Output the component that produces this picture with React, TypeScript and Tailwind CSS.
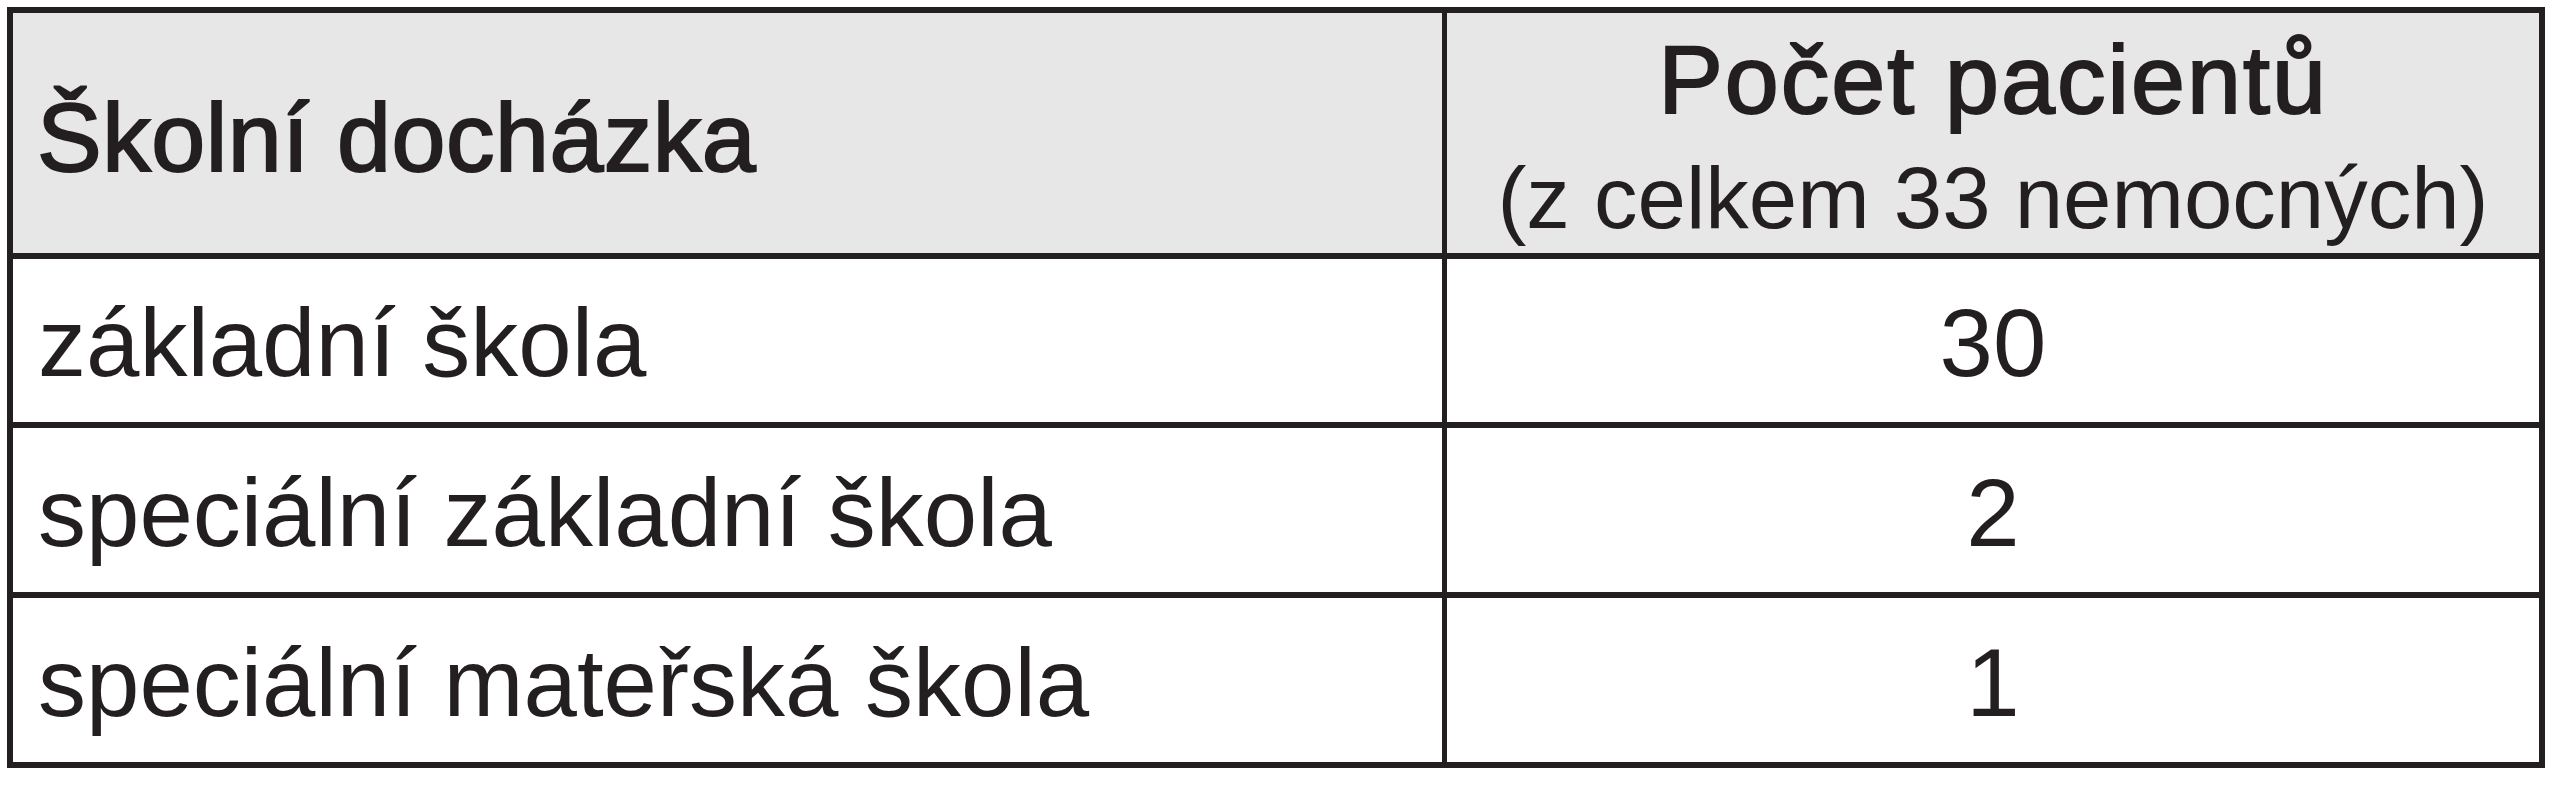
import React from "react";

const rows = [
  { label: "základní škola", value: "30" },
  { label: "speciální základní škola", value: "2" },
  { label: "speciální mateřská škola", value: "1" },
];

export default function App() {
  return (
    <div className="min-h-[800px] w-[2555px] bg-white pl-[7px] pt-[7px] font-['Liberation_Sans',Arial,sans-serif] text-[#231f20]">
      <div className="flex w-[2538px] flex-col border-[6px] border-[#231f20]">
        {/* header */}
        <div className="flex h-[240px] bg-[#e7e7e7]">
          <div className="flex w-[1434px] shrink-0 items-center border-r-[5px] border-[#231f20] pl-[24px] pt-[8px]">
            <span className="text-[97px] leading-none tracking-[0.5px] [-webkit-text-stroke:2px_#231f20]">
              Školní docházka
            </span>
          </div>
          <div className="flex flex-1 flex-col items-center pt-[17px]">
            <div className="text-[97px] leading-[100px] tracking-[2px] [-webkit-text-stroke:2px_#231f20]">
              Počet pacientů
            </div>
            <div className="mt-[18px] text-[87px] leading-[100px]">
              (z celkem 33 nemocných)
            </div>
          </div>
        </div>
        {rows.map((r, i) => (
          <div
            key={r.label}
            className={`flex border-t-[6px] border-[#231f20] ${i === 0 ? "h-[169px]" : "h-[170px]"}`}
          >
            <div className="flex w-[1434px] shrink-0 items-center border-r-[5px] border-[#231f20] pl-[25px] pt-[5px]">
              <span className="text-[96px] leading-none">{r.label}</span>
            </div>
            <div className="flex flex-1 items-center justify-center pt-[5px]">
              <span className="text-[96px] leading-none">{r.value}</span>
            </div>
          </div>
        ))}
      </div>
    </div>
  );
}
